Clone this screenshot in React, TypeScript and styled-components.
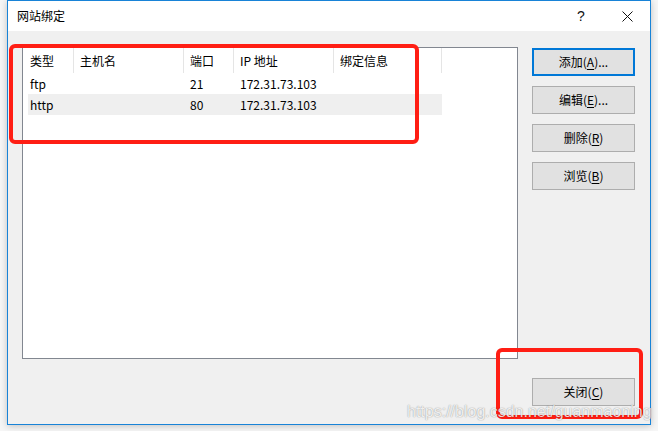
import React from "react";
import styled, { createGlobalStyle } from "styled-components";

const GlobalStyle = createGlobalStyle`
  html, body { margin: 0; padding: 0; background: #f5f5f5; }
  body {
    font-family: "Noto Sans CJK SC", "Liberation Sans", sans-serif;
    font-size: 12px;
    color: #000;
  }
`;

const Stage = styled.div`
  position: relative;
  width: 658px;
  height: 431px;
  overflow: hidden;
  background: #f6f6f6;
`;

const Window = styled.div`
  margin-left: 7px;
  width: 644px;
  height: 425px;
  box-sizing: border-box;
  border: 1px solid #1883d7;
  background: #f0f0f0;
  display: flex;
  flex-direction: column;
  box-shadow: 0 1px 7px rgba(0, 0, 0, 0.22);
`;

const TitleBar = styled.div`
  height: 30px;
  flex: none;
  background: #fff;
  display: flex;
  align-items: center;
`;

const Title = styled.div`
  flex: 1;
  padding-left: 9px;
  font-size: 12px;
  line-height: 30px;
`;

const CaptionButton = styled.div`
  width: 46px;
  height: 30px;
  display: flex;
  align-items: center;
  justify-content: center;
  font-family: "Liberation Sans", sans-serif;
  font-size: 14px;
  color: #111;
`;

const Body = styled.div`
  flex: 1;
  display: flex;
  padding: 16px 0 18px 14px;
  min-height: 0;
`;

const ListBox = styled.div`
  width: 496px;
  height: 312px;
  box-sizing: border-box;
  border: 1px solid #828790;
  background: #fff;
  flex: none;
`;

const Header = styled.div`
  display: grid;
  grid-template-columns: 51px 110px 50px 100px 108px;
  height: 25px;
`;

const HeaderCell = styled.div<{ $first?: boolean }>`
  padding-left: ${(p) => (p.$first ? 7 : 6)}px;
  line-height: 25px;
  border-right: 1px solid #e5e5e5;
  white-space: nowrap;
  color: #000;
`;

const Row = styled.div<{ $shaded?: boolean }>`
  display: grid;
  grid-template-columns: 46px 110px 50px 100px 108px;
  height: 21px;
  margin-left: 5px;
  width: 414px;
  background: ${(p) => (p.$shaded ? "#efefef" : "transparent")};
`;

const Cell = styled.div<{ $first?: boolean }>`
  padding-left: ${(p) => (p.$first ? 2 : 6)}px;
  line-height: 21px;
  white-space: nowrap;
`;

const Side = styled.div`
  margin-left: 14px;
  margin-top: 1px;
  width: 103px;
  display: flex;
  flex-direction: column;
  gap: 10px;
`;

const Button = styled.div<{ $default?: boolean }>`
  height: 28px;
  box-sizing: border-box;
  background: #e1e1e1;
  border: ${(p) => (p.$default ? "2px solid #0078d7" : "1px solid #adadad")};
  display: flex;
  align-items: center;
  justify-content: center;
  font-size: 12px;
  line-height: 1;
  white-space: nowrap;
  u { text-underline-offset: 2px; }
`;

const Spacer = styled.div`
  flex: 1;
`;

const Mark = styled.div<{ $x: number; $y: number; $w: number; $h: number }>`
  position: absolute;
  left: ${(p) => p.$x}px;
  top: ${(p) => p.$y}px;
  width: ${(p) => p.$w}px;
  height: ${(p) => p.$h}px;
  box-sizing: border-box;
  border: 4px solid #ff1e14;
  border-radius: 6px;
  pointer-events: none;
`;

const Watermark = styled.div`
  position: absolute;
  left: 407px;
  top: 402px;
  font-family: "Liberation Sans", Arial, sans-serif;
  font-size: 16px;
  line-height: 20px;
  color: rgba(255, 255, 255, 0.85);
  text-shadow: 0 0 1px rgba(0, 0, 0, 0.35), 0 0 2px rgba(0, 0, 0, 0.15);
  pointer-events: none;
`;

const CloseIcon = () => (
  <svg width="11" height="11" viewBox="0 0 11 11">
    <path d="M0.5 0.5 L10.5 10.5 M10.5 0.5 L0.5 10.5" stroke="#111" strokeWidth="1" fill="none" />
  </svg>
);

const rows = [
  { type: "ftp", host: "", port: "21", ip: "172.31.73.103", info: "" },
  { type: "http", host: "", port: "80", ip: "172.31.73.103", info: "" },
];

export default function App() {
  return (
    <>
      <GlobalStyle />
      <Stage>
        <Window>
          <TitleBar>
            <Title>网站绑定</Title>
            <CaptionButton>?</CaptionButton>
            <CaptionButton>
              <CloseIcon />
            </CaptionButton>
          </TitleBar>
          <Body>
            <ListBox>
              <Header>
                <HeaderCell $first>类型</HeaderCell>
                <HeaderCell>主机名</HeaderCell>
                <HeaderCell>端口</HeaderCell>
                <HeaderCell>IP 地址</HeaderCell>
                <HeaderCell>绑定信息</HeaderCell>
              </Header>
              {rows.map((r, i) => (
                <Row key={r.type} $shaded={i === 1}>
                  <Cell $first>{r.type}</Cell>
                  <Cell>{r.host}</Cell>
                  <Cell>{r.port}</Cell>
                  <Cell>{r.ip}</Cell>
                  <Cell>{r.info}</Cell>
                </Row>
              ))}
            </ListBox>
            <Side>
              <Button $default>
                添加(<u>A</u>)...
              </Button>
              <Button>
                编辑(<u>E</u>)...
              </Button>
              <Button>
                删除(<u>R</u>)
              </Button>
              <Button>
                浏览(<u>B</u>)
              </Button>
              <Spacer />
              <Button>
                关闭(<u>C</u>)
              </Button>
            </Side>
          </Body>
        </Window>
        <Mark $x={9} $y={44} $w={410} $h={100} />
        <Mark $x={496} $y={348} $w={147} $h={71} />
        <Watermark>https://blog.csdn.net/guanmaoning</Watermark>
      </Stage>
    </>
  );
}
